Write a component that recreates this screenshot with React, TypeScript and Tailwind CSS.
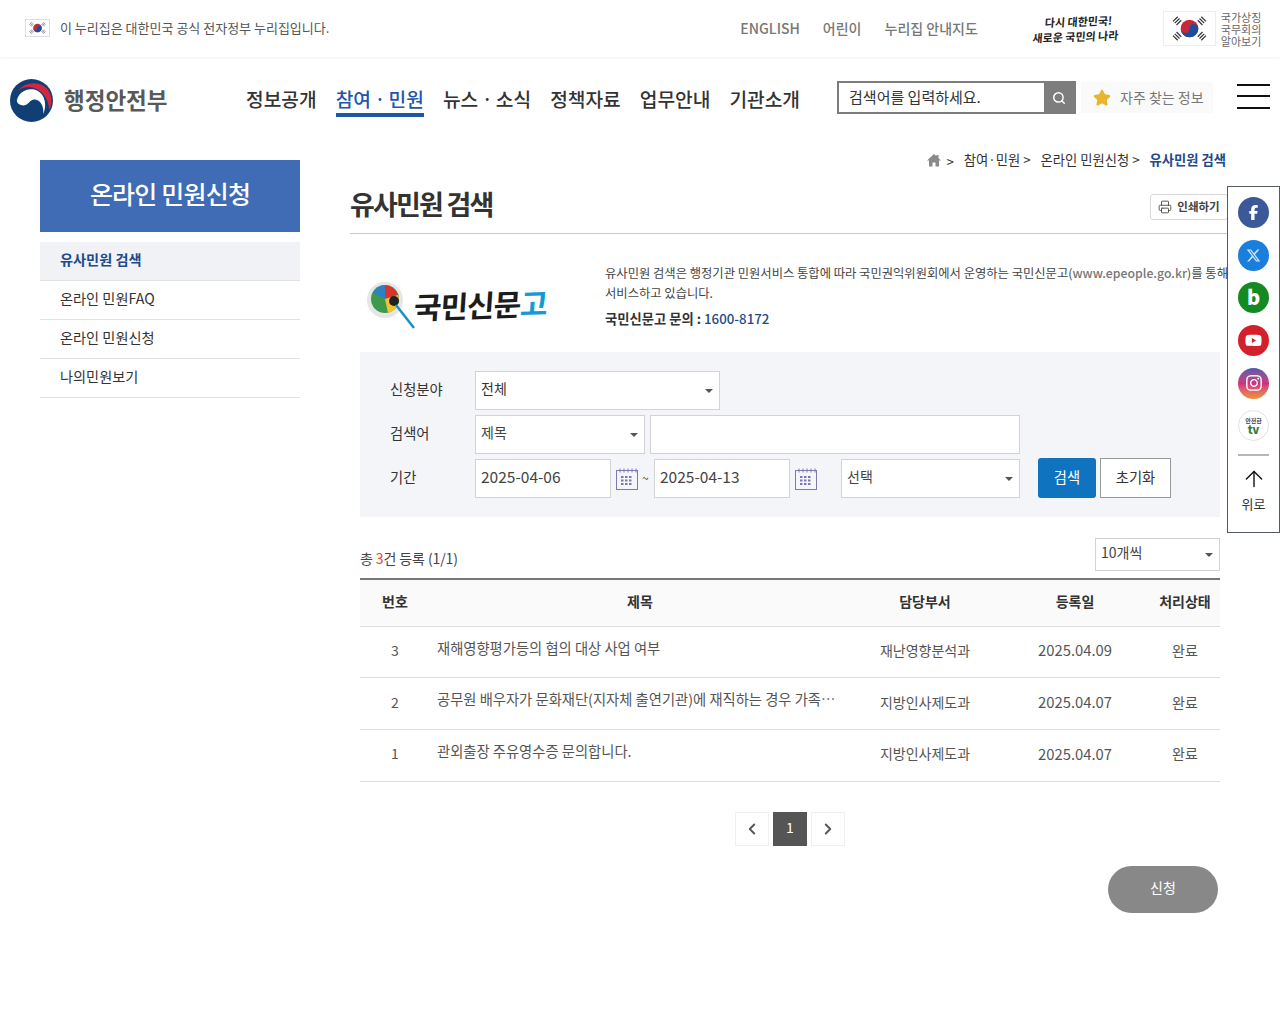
import { ArrowUp, ChevronLeft, ChevronRight, Printer, Search, Star } from 'lucide-react';
import { FaFacebookF, FaInstagram, FaXTwitter, FaYoutube } from 'react-icons/fa6';

const FONT = "font-['Noto_Sans_CJK_KR','Noto_Sans',sans-serif]";

const NAV = ['정보공개', '참여ㆍ민원', '뉴스ㆍ소식', '정책자료', '업무안내', '기관소개'];
const SIDE = ['유사민원 검색', '온라인 민원FAQ', '온라인 민원신청', '나의민원보기'];
const ROWS = [
  { no: 3, title: '재해영향평가등의 협의 대상 사업 여부', dept: '재난영향분석과', date: '2025.04.09' },
  { no: 2, title: '공무원 배우자가 문화재단(지자체 출연기관)에 재직하는 경우 가족…', dept: '지방인사제도과', date: '2025.04.07' },
  { no: 1, title: '관외출장 주유영수증 문의합니다.', dept: '지방인사제도과', date: '2025.04.07' },
];

function Flag({ className }: { className?: string }) {
  const bars = [
    'M6 8 L10 4 M7.5 9.5 L11.5 5.5 M9 11 L13 7',
    'M27 7 L31 11 M28.5 5.5 L32.5 9.5 M30 4 L34 8',
    'M6 20 L10 24 M7.5 18.5 L11.5 22.5 M9 17 L13 21',
    'M27 21 L31 17 M28.5 22.5 L32.5 18.5 M30 24 L34 20',
  ];
  return (
    <svg viewBox="0 0 40 28" className={className}>
      <rect width="40" height="28" fill="#fff" />
      {bars.map((d) => (
        <path key={d} d={d} stroke="#333" strokeWidth="1" />
      ))}
      <circle cx="20" cy="14" r="7.5" fill="#c8283c" />
      <path d="M12.5 14 a3.75 3.75 0 0 0 7.5 0 a3.75 3.75 0 0 1 7.5 0 a7.5 7.5 0 0 1 -15 0z" fill="#1c4e9c" />
    </svg>
  );
}

function GovLogo() {
  return (
    <svg viewBox="0 0 44 44" className="h-[43px] w-[43px] shrink-0">
      <circle cx="22" cy="22" r="22" fill="#0f3f74" />
      <path d="M8 12 C14 4 28 1 37 9 C43 15 44 24 40 32 C40 22 34 12 24 9 C18 7 12 9 8 12z" fill="#d3263f" />
      <path d="M7 22 C9 12 20 8 28 12 C36 16 38 27 34 36 C35 28 31 21 25 21 C20 21 19 27 14 27 C10 27 7 25 7 22z" fill="#fff" />
    </svg>
  );
}

function Caret() {
  return <span className="h-0 w-0 border-x-[4px] border-t-[4px] border-x-transparent border-t-[#555]" />;
}

function SelectBox({ label, className, dark }: { label: string; className: string; dark?: boolean }) {
  return (
    <div className={`flex items-center justify-between border border-[#d3d3d3] bg-white pl-[5px] pr-[6px] text-[14px] ${dark ? 'text-[#333]' : 'text-[#444]'} ${className}`}>
      <span className="-mt-[4px]">{label}</span>
      <Caret />
    </div>
  );
}

function CalendarIcon() {
  return (
    <svg viewBox="0 0 22 22" className="h-[22px] w-[22px] shrink-0" fill="none" stroke="#7b78b5">
      <rect x="0.5" y="2.5" width="21" height="19" fill="#f5f5fb" />
      <path d="M4 0.5v4M8 0.5v4M12 0.5v4M16 0.5v4M20 0.5v4" strokeDasharray="1.5 1" />
      <path d="M5 9h12M5 12.5h12M5 16h12" strokeWidth="2" strokeDasharray="2.5 1.5" />
    </svg>
  );
}

function DateBox({ value }: { value: string }) {
  return (
    <div className="flex h-[39px] w-[136px] items-center border border-[#d3d3d3] bg-white pl-[5px] text-[15.5px] text-[#444]">
      <span className="-mt-[3px]">{value}</span>
    </div>
  );
}

function Social({ className, children }: { className: string; children: React.ReactNode }) {
  return (
    <div className={`flex h-[31px] w-[31px] items-center justify-center rounded-full text-white ${className}`}>
      {children}
    </div>
  );
}

function QuickBar() {
  return (
    <aside className="absolute left-[1227px] top-[186px] z-10 flex h-[347px] w-[53px] flex-col items-center border border-[#555b66] bg-white pt-[10px]">
      <div className="flex flex-col gap-[11.7px]">
        <Social className="bg-[#3b5998]"><FaFacebookF size={15} /></Social>
        <Social className="bg-[#1a7fdc]"><FaXTwitter size={15} className="text-[#cfe6fb]" /></Social>
        <Social className="bg-[#168a22]"><span className="-mt-[2px] text-[20px] font-black leading-none">b</span></Social>
        <Social className="bg-[#d3202a]"><FaYoutube size={17} /></Social>
        <Social className="bg-gradient-to-b from-[#4c58a8] via-[#d1307f] to-[#f0922b]"><FaInstagram size={18} /></Social>
        <Social className="flex-col border border-[#e3e3e3] bg-white">
          <span className="text-[6px] font-bold leading-[6px] text-[#445]">안전한</span>
          <span className="text-[11px] font-black leading-[10px] text-[#2f7d3a]">tv</span>
        </Social>
      </div>
      <div className="mt-[13px] h-[2px] w-[31px] bg-[#b4b6ba]" />
      <ArrowUp size={26} strokeWidth={1.3} className="mt-[10px] text-[#111]" />
      <span className="mt-[2px] text-[13px] text-[#333]">위로</span>
    </aside>
  );
}

export default function App() {
  return (
    <div className={`relative h-[1024px] w-[1280px] overflow-hidden bg-white text-[#333] ${FONT}`}>
      <QuickBar />

      <div className="flex h-[58px] items-center border-b border-[#f6f6f6] pl-[25px] shadow-[0_1px_2px_#f8f8f8]">
        <Flag className="-mt-[1px] h-[18px] w-[25px] border border-[#ddd]" />
        <span className="-mt-[2px] ml-[10px] text-[13px] text-[#555]">이 누리집은 대한민국 공식 전자정부 누리집입니다.</span>
        <div className="ml-[411px] flex gap-[23px] text-[14px] font-medium text-[#777]">
          <span>ENGLISH</span>
          <span>어린이</span>
          <span>누리집 안내지도</span>
        </div>
        <div className="ml-[55px] w-[84px] shrink-0 -rotate-2 -skew-x-6 whitespace-nowrap text-center text-[11px] font-bold leading-[15px] text-[#222]">
          <div className="pl-[6px]">다시 대한민국!</div>
          <div>새로운 국민의 나라</div>
        </div>
        <Flag className="ml-[46px] h-[35px] w-[53px] shrink-0 border border-[#eee]" />
        <div className="ml-[5px] w-[42px] shrink-0 text-[11px] leading-[12px] text-[#666]">
          국가상징
          <br />
          국무회의
          <br />
          알아보기
        </div>
      </div>

      <header className="flex h-[84px] items-center pl-[10px]">
        <GovLogo />
        <span className="ml-[11px] w-[104px] shrink-0 whitespace-nowrap text-[22.5px] font-bold text-[#595959]">행정안전부</span>
        <nav className="ml-[78px] flex h-[46px] items-start gap-[19px]">
          {NAV.map((n) => (
            <div
              key={n}
              className={`flex h-[40px] items-center whitespace-nowrap border-b-[4px] pt-[8px] text-[19.2px] font-medium ${n === '참여ㆍ민원' ? 'border-[#1e56a8] text-[#1e56a8]' : 'border-transparent text-[#333]'}`}
            >
              {n}
            </div>
          ))}
        </nav>
        <div className="-mt-[5px] ml-[37px] flex h-[33px] w-[239px] shrink-0 items-center border-2 border-[#7d7d7d] pl-[10px] text-[15px] text-[#333]">
          <span className="flex-1">검색어를 입력하세요.</span>
          <span className="flex h-full w-[30px] items-center justify-center bg-[#7d7d7d]">
            <Search size={14} strokeWidth={2.5} className="text-white" />
          </span>
        </div>
        <div className="-mt-[5px] ml-[5px] flex h-[31px] w-[132px] shrink-0 items-center bg-[#fafafa] pl-[12px] text-[14px] text-[#777]">
          <Star size={18} fill="#e8b52f" stroke="#e8b52f" />
          <span className="ml-[9px]">자주 찾는 정보</span>
        </div>
        <div className="-mt-[8px] ml-[24px] flex w-[33px] shrink-0 flex-col gap-[9.5px]">
          <span className="h-[2px] bg-[#111]" />
          <span className="h-[2px] bg-[#111]" />
          <span className="h-[2px] bg-[#111]" />
        </div>
      </header>

      <main className="mt-[18px] flex pl-[40px]">
        <aside className="w-[260px] shrink-0">
          <div className="flex h-[72px] items-center justify-center bg-[#3f6cb4] pb-[5px] text-[25px] font-medium tracking-[-0.8px] text-white">
            온라인 민원신청
          </div>
          <ul className="mt-[10px]">
            {SIDE.map((s, i) => (
              <li
                key={s}
                className={`flex h-[39px] items-center border-b border-[#e2e2e2] pb-[2px] pl-[20px] text-[14.2px] ${i === 0 ? 'bg-[#f0f2f5] font-bold text-[#1d4a8c]' : 'text-[#333]'}`}
              >
                {s}
              </li>
            ))}
          </ul>
        </aside>

        <section className="-mt-[10px] ml-[50px] w-[900px] shrink-0">
          <div className="flex h-[20px] w-[876px] items-center justify-end text-[13.3px] text-[#333]">
            <svg viewBox="0 0 14 14" className="h-[14px] w-[14px] shrink-0" fill="#8a8a8a">
              <path d="M7 1 L0 7.5 h2 v6 h3.5 v-4 h3 v4 h3.5 v-6 h2 L11.5 5.2 V2 h-2 v1.2z" />
            </svg>
            <span className="ml-[5px] mr-[10px] mt-[3px]">&gt;</span>
            <span>참여·민원 &gt;</span>
            <span className="ml-[10px]">온라인 민원신청 &gt;</span>
            <span className="ml-[10px] font-bold text-[#1d4a8c]">유사민원 검색</span>
          </div>

          <div className="flex h-[64px] items-center justify-between border-b border-[#c9c9c9] pt-[6px]">
            <h1 className="text-[27px] font-bold tracking-[-1.8px] text-[#333]">유사민원 검색</h1>
            <div className="mr-[22px] mt-[5px] flex h-[26px] w-[78px] items-center justify-center gap-[5px] rounded-[3px] border border-[#d8d8d8] text-[11.5px] font-bold text-[#444]">
              <Printer size={14} strokeWidth={1.5} />
              인쇄하기
            </div>
          </div>

          <div className="flex h-[118px] items-start">
            <div className="ml-[15px] mt-[44px] flex w-[240px] items-center">
              <svg viewBox="0 0 50 52" className="h-[52px] w-[50px] shrink-0">
                <circle cx="20" cy="22" r="18" fill="#e6e6e6" />
                <circle cx="20" cy="21" r="14" fill="#3d9a4a" />
                <path d="M20 7a14 14 0 0 1 13 10L20 21z" fill="#d9342b" />
                <path d="M20 21l13-4a14 14 0 0 1-10 18z" fill="#f2c230" />
                <path d="M8 15a14 14 0 0 1 12-8v14z" fill="#2f7fc4" />
                <circle cx="29" cy="23" r="5" fill="#222" />
                <path d="M31 27 L49 50" stroke="#1b90c8" strokeWidth="2.5" />
              </svg>
              <span className="-ml-[1px] -rotate-2 -skew-x-6 text-[30px] font-bold tracking-[-1px] text-[#1c1c1c]">
                국민신문<span className="text-[#159bd4]">고</span>
              </span>
            </div>
            <div className="mt-[29px] whitespace-nowrap text-[12.3px] leading-[20px] text-[#444]">
              <p>
                유사민원 검색은 행정기관 민원서비스 통합에 따라 국민권익위원회에서 운영하는 국민신문고(
                <span className="font-medium text-[#777]">www.epeople.go.kr</span>)를 통해
              </p>
              <p>서비스하고 있습니다.</p>
              <p className="mt-[6px] text-[13.3px] font-bold text-[#333]">
                국민신문고 문의 : <span className="font-medium text-[#1d4a8c]">1600-8172</span>
              </p>
            </div>
          </div>

          <div className="ml-[10px] w-[860px]">
            <div className="flex h-[165px] flex-col gap-[5px] bg-[#f3f5f9] pl-[30px] pt-[19px]">
              <div className="flex items-center">
                <span className="-mt-[3px] w-[85px] text-[14.3px] text-[#333]">신청분야</span>
                <SelectBox label="전체" className="h-[39px] w-[245px]" dark />
              </div>
              <div className="flex items-center">
                <span className="-mt-[3px] w-[85px] text-[14.3px] text-[#333]">검색어</span>
                <SelectBox label="제목" className="h-[39px] w-[170px]" />
                <input className="ml-[5px] h-[39px] w-[370px] border border-[#d3d3d3] bg-white" />
              </div>
              <div className="-mt-[1px] flex items-end">
                <span className="mb-[11px] w-[85px] text-[14.3px] text-[#333]">기간</span>
                <DateBox value="2025-04-06" />
                <span className="mb-[8px] ml-[5px]"><CalendarIcon /></span>
                <span className="mb-[11px] w-[16px] pl-[4px] text-[12px] text-[#444]">~</span>
                <DateBox value="2025-04-13" />
                <span className="mb-[8px] ml-[5px]"><CalendarIcon /></span>
                <SelectBox label="선택" className="ml-[24px] h-[39px] w-[179px]" />
                <button className="ml-[18px] h-[40px] w-[58px] rounded-[3px] bg-[#0f73bf] pb-[3px] text-[14.3px] text-white">검색</button>
                <button className="ml-[4px] h-[40px] w-[71px] border border-[#999] bg-white pb-[3px] text-[14.3px] text-[#333]">초기화</button>
              </div>
            </div>

            <div className="mt-[21px] flex h-[33px] items-end justify-between">
              <span className="pb-[2px] text-[14px] tracking-[-0.1px] text-[#444]">
                총 <span className="text-[#e2463c]">3</span>건 등록 (1/1)
              </span>
              <SelectBox label="10개씩" className="h-[33px] w-[125px]" />
            </div>

            <table className="mt-[7px] w-full table-fixed border-t-2 border-[#777] text-[14px]">
              <thead>
                <tr className="h-[47px] border-b border-[#ddd] bg-[#fafafa] text-[14px] font-bold text-[#333]">
                  <th className="w-[70px] pb-[2px] font-bold">번호</th>
                  <th className="w-[420px] pb-[2px] font-bold">제목</th>
                  <th className="w-[150px] pb-[2px] font-bold">담당부서</th>
                  <th className="w-[150px] pb-[2px] font-bold">등록일</th>
                  <th className="w-[70px] pb-[2px] font-bold">처리상태</th>
                </tr>
              </thead>
              <tbody>
                {ROWS.map((r) => (
                  <tr key={r.no} className="h-[51.7px] border-b border-[#ddd] text-center text-[#555]">
                    <td className="pb-[3px]">{r.no}</td>
                    <td className="pb-[9px] pl-[7px] pr-[12px] text-left">
                      <div className="whitespace-nowrap text-[14.3px]">{r.title}</div>
                    </td>
                    <td className="pb-[3px]">{r.dept}</td>
                    <td className="pb-[3px] text-[14.8px]">{r.date}</td>
                    <td className="pb-[3px]">완료</td>
                  </tr>
                ))}
              </tbody>
            </table>

            <div className="mt-[30px] flex justify-center gap-[4px]">
              <span className="flex h-[34px] w-[34px] items-center justify-center border border-[#f0f0f0] text-[#555]">
                <ChevronLeft size={18} strokeWidth={2.5} />
              </span>
              <span className="flex h-[34px] w-[34px] items-center justify-center bg-[#555] pb-[3px] text-[14px] text-white">1</span>
              <span className="flex h-[34px] w-[34px] items-center justify-center border border-[#f0f0f0] text-[#555]">
                <ChevronRight size={18} strokeWidth={2.5} />
              </span>
            </div>

            <div className="mr-[2px] mt-[20px] flex justify-end">
              <button className="h-[47px] w-[110px] rounded-full bg-[#888] pb-[3px] text-[14px] text-white">신청</button>
            </div>
          </div>
        </section>
      </main>
    </div>
  );
}
